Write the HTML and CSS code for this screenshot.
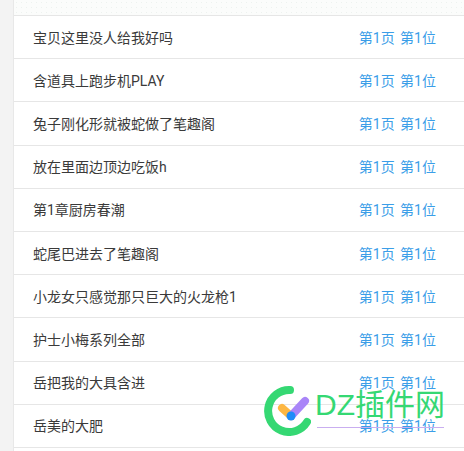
FILE: index.html
```html
<!DOCTYPE html>
<html lang="zh">
<head>
<meta charset="utf-8">
<title>排名</title>
<link rel="stylesheet" href="styles.css">
</head>
<body>
<div class="page">
  <div class="panel">
    <div class="head"></div>
    <ul class="list">
      <li class="row"><span class="name">宝贝这里没人给我好吗</span><span class="rank">第1页 第1位</span></li>
      <li class="row"><span class="name">含道具上跑步机PLAY</span><span class="rank">第1页 第1位</span></li>
      <li class="row"><span class="name">兔子刚化形就被蛇做了笔趣阁</span><span class="rank">第1页 第1位</span></li>
      <li class="row"><span class="name">放在里面边顶边吃饭h</span><span class="rank">第1页 第1位</span></li>
      <li class="row"><span class="name">第1章厨房春潮</span><span class="rank">第1页 第1位</span></li>
      <li class="row"><span class="name">蛇尾巴进去了笔趣阁</span><span class="rank">第1页 第1位</span></li>
      <li class="row"><span class="name">小龙女只感觉那只巨大的火龙枪1</span><span class="rank">第1页 第1位</span></li>
      <li class="row"><span class="name">护士小梅系列全部</span><span class="rank">第1页 第1位</span></li>
      <li class="row"><span class="name">岳把我的大具含进</span><span class="rank">第1页 第1位</span></li>
      <li class="row"><span class="name">岳美的大肥</span><span class="rank">第1页 第1位</span></li>
    </ul>
  </div>
</div>
<div class="watermark">
  <svg class="wm-logo" width="48" height="52" viewBox="0 0 48 52">
    <path d="M27 6 A21 21 0 1 0 44 38" fill="none" stroke="#35d873" stroke-width="8" stroke-linecap="round"/>
    <line x1="19" y1="24" x2="28" y2="32" stroke="#fdb743" stroke-width="8" stroke-linecap="round"/>
    <line x1="29" y1="31" x2="42" y2="17" stroke="#a985f8" stroke-width="8" stroke-linecap="round"/>
    <circle cx="28" cy="32" r="4.5" fill="#1e8cf8"/>
  </svg>
  <div class="wm-text">
    <span class="wm-title">DZ插件网</span>
    <span class="wm-line"></span>
  </div>
</div>
</body>
</html>
```
FILE: styles.css
```css
html, body {
  margin: 0;
  padding: 0;
  height: 100%;
  overflow: hidden;
  background: #f3f3f3;
}
.page {
  padding-left: 13px;
  height: 451px;
  overflow: hidden;
}
.panel {
  background: #fff;
  border-left: 1px solid #e8e8e8;
  height: 100%;
}
.head {
  height: 15px;
  background-color: #fbfcfb;
  background-image: radial-gradient(#edf2ef 0.6px, transparent 0.7px);
  background-size: 5px 5px;
  border-bottom: 1px solid #e6e6e6;
}
.list {
  list-style: none;
  margin: 0;
  padding: 0;
}
.row {
  box-sizing: border-box;
  height: 43.2px;
  display: flex;
  justify-content: space-between;
  align-items: center;
  padding: 1px 28px 0 19px;
  border-bottom: 1px solid #e6e6e6;
  font: 14px/20px Roboto, "Noto Sans CJK SC", sans-serif;
}
.name { color: #3a3a3a; }
.rank { color: #3b9ee8; word-spacing: 2px; }
.watermark {
  position: absolute;
  left: 263px;
  top: 384px;
  display: flex;
  align-items: flex-start;
  gap: 4px;
}
.wm-logo { display: block; }
.wm-text {
  display: flex;
  flex-direction: column;
  width: 129px;
}
.wm-title {
  font: 30px/34px "Liberation Sans", "Noto Sans CJK SC", sans-serif;
  color: #35d873;
  margin-top: 4px;
  white-space: nowrap;
}
.wm-line {
  height: 1px;
  background: #c9aef0;
  margin: 5px 0 0 2px;
}
```
